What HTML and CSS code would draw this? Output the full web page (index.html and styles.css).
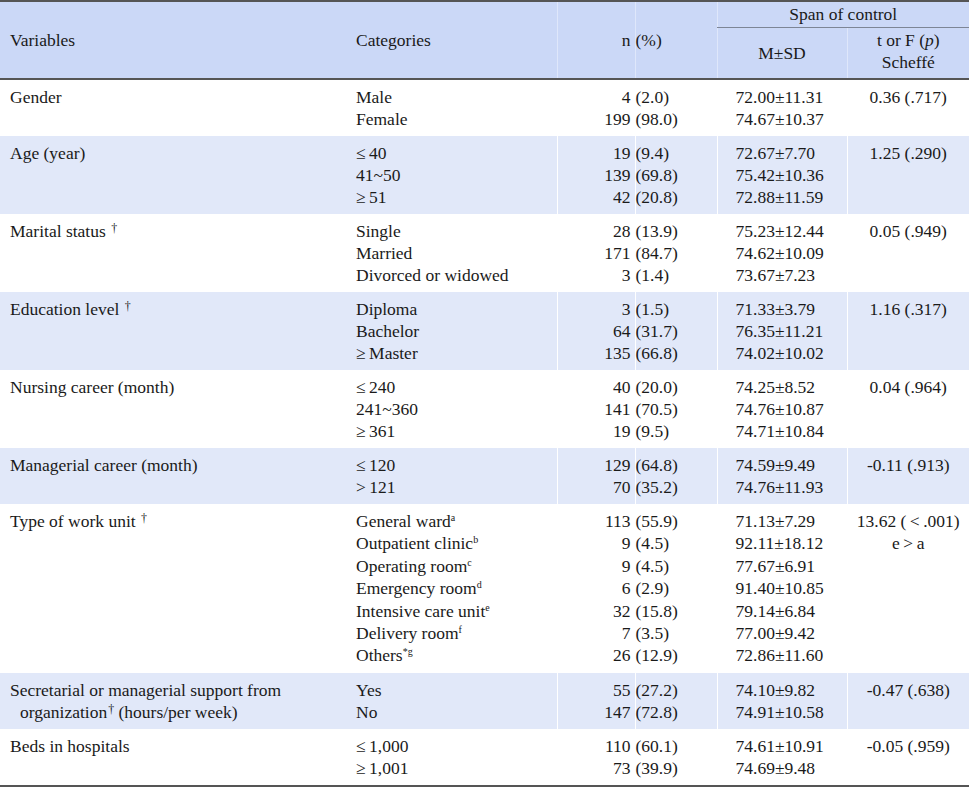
FILE: index.html
```html
<!DOCTYPE html>
<html>
<head>
<meta charset="utf-8">
<link rel="stylesheet" href="styles.css">
</head>
<body>
<table class="tbl">
  <colgroup>
    <col class="c-var"><col class="c-cat"><col class="c-n"><col class="c-pct"><col class="c-msd"><col class="c-t">
  </colgroup>
  <thead>
    <tr class="h1">
      <th rowspan="2" class="var">Variables</th>
      <th rowspan="2" class="cat">Categories</th>
      <th rowspan="2" class="n">n</th>
      <th rowspan="2" class="pct">(%)</th>
      <th colspan="2" class="span">Span of control</th>
    </tr>
    <tr class="h2">
      <th class="msd">M±SD</th>
      <th class="t">t or F (<i>p</i>)<br>Scheffé</th>
    </tr>
  </thead>
  <tbody>
    <tr>
      <td class="var">Gender</td>
      <td class="cat">Male<br>Female</td>
      <td class="n">4<br>199</td>
      <td class="pct">(2.0)<br>(98.0)</td>
      <td class="msd">72.00±11.31<br>74.67±10.37</td>
      <td class="t">0.36 (.717)</td>
    </tr>
    <tr class="alt">
      <td class="var">Age (year)</td>
      <td class="cat">≤&thinsp;40<br>41~50<br>≥&thinsp;51</td>
      <td class="n">19<br>139<br>42</td>
      <td class="pct">(9.4)<br>(69.8)<br>(20.8)</td>
      <td class="msd">72.67±7.70<br>75.42±10.36<br>72.88±11.59</td>
      <td class="t">1.25 (.290)</td>
    </tr>
    <tr>
      <td class="var">Marital status <sup class="dag">†</sup></td>
      <td class="cat">Single<br>Married<br>Divorced or widowed</td>
      <td class="n">28<br>171<br>3</td>
      <td class="pct">(13.9)<br>(84.7)<br>(1.4)</td>
      <td class="msd">75.23±12.44<br>74.62±10.09<br>73.67±7.23</td>
      <td class="t">0.05 (.949)</td>
    </tr>
    <tr class="alt">
      <td class="var">Education level <sup class="dag">†</sup></td>
      <td class="cat">Diploma<br>Bachelor<br>≥&thinsp;Master</td>
      <td class="n">3<br>64<br>135</td>
      <td class="pct">(1.5)<br>(31.7)<br>(66.8)</td>
      <td class="msd">71.33±3.79<br>76.35±11.21<br>74.02±10.02</td>
      <td class="t">1.16 (.317)</td>
    </tr>
    <tr>
      <td class="var">Nursing career (month)</td>
      <td class="cat">≤&thinsp;240<br>241~360<br>≥&thinsp;361</td>
      <td class="n">40<br>141<br>19</td>
      <td class="pct">(20.0)<br>(70.5)<br>(9.5)</td>
      <td class="msd">74.25±8.52<br>74.76±10.87<br>74.71±10.84</td>
      <td class="t">0.04 (.964)</td>
    </tr>
    <tr class="alt">
      <td class="var">Managerial career (month)</td>
      <td class="cat">≤&thinsp;120<br>&gt;&thinsp;121</td>
      <td class="n">129<br>70</td>
      <td class="pct">(64.8)<br>(35.2)</td>
      <td class="msd">74.59±9.49<br>74.76±11.93</td>
      <td class="t">-0.11 (.913)</td>
    </tr>
    <tr class="tall">
      <td class="var">Type of work unit <sup class="dag">†</sup></td>
      <td class="cat">General ward<sup>a</sup><br>Outpatient clinic<sup>b</sup><br>Operating room<sup>c</sup><br>Emergency room<sup>d</sup><br>Intensive care unit<sup>e</sup><br>Delivery room<sup>f</sup><br>Others<sup>*g</sup></td>
      <td class="n">113<br>9<br>9<br>6<br>32<br>7<br>26</td>
      <td class="pct">(55.9)<br>(4.5)<br>(4.5)<br>(2.9)<br>(15.8)<br>(3.5)<br>(12.9)</td>
      <td class="msd">71.13±7.29<br>92.11±18.12<br>77.67±6.91<br>91.40±10.85<br>79.14±6.84<br>77.00±9.42<br>72.86±11.60</td>
      <td class="t">13.62 (&thinsp;&lt;&thinsp;.001)<br>e&thinsp;&gt;&thinsp;a</td>
    </tr>
    <tr class="alt">
      <td class="var"><div class="hang">Secretarial or managerial support from<br>organization<sup class="dag">†</sup> (hours/per week)</div></td>
      <td class="cat">Yes<br>No</td>
      <td class="n">55<br>147</td>
      <td class="pct">(27.2)<br>(72.8)</td>
      <td class="msd">74.10±9.82<br>74.91±10.58</td>
      <td class="t">-0.47 (.638)</td>
    </tr>
    <tr>
      <td class="var">Beds in hospitals</td>
      <td class="cat">≤&thinsp;1,000<br>≥&thinsp;1,001</td>
      <td class="n">110<br>73</td>
      <td class="pct">(60.1)<br>(39.9)</td>
      <td class="msd">74.61±10.91<br>74.69±9.48</td>
      <td class="t">-0.05 (.959)</td>
    </tr>
  </tbody>
</table>
</body>
</html>
```

FILE: styles.css
```css
html, body {
  margin: 0;
  padding: 0;
  background: #ffffff;
}

.tbl {
  border-collapse: collapse;
  table-layout: fixed;
  width: 969px;
  font-family: "Liberation Serif", "Times New Roman", serif;
  font-size: 17.5px;
  line-height: 22px;
  color: #1a1a1a;
  border-top: 2px solid #555555;
  border-bottom: 2px solid #555555;
}

.c-var { width: 345px; }
.c-cat { width: 212px; }
.c-n { width: 78px; }
.c-pct { width: 82px; }
.c-msd { width: 130px; }
.c-t { width: 122px; }

.tbl th {
  font-weight: normal;
  background: #cbd8f7;
  vertical-align: middle;
  padding: 3px 0;
}

.tbl thead {
  border-bottom: 2px solid #555555;
}

.tbl th.var { text-align: left; padding-left: 10px; }
.tbl th.cat { text-align: left; padding-left: 11px; }
.tbl th.n { text-align: right; padding-right: 4px; border-left: 1px solid #dfe7fb; }
.tbl th.pct { text-align: left; padding-left: 0; border-left: 1px solid #dfe7fb; }
.tbl th.span {
  text-align: center;
  border-left: 1px solid #dfe7fb;
  border-bottom: 1px solid #7d8596;
  height: 22px;
  padding: 1px 0 2px;
}
.tbl th.msd { text-align: center; border-left: 1px solid #dfe7fb; }
.tbl th.t { text-align: center; border-left: 1px solid #dfe7fb; padding: 1px 0 5px; }

.tbl td {
  vertical-align: top;
  padding: 6px 0;
  white-space: nowrap;
}

.tbl tr.alt td { background: #e1e8f9; }
.tbl tr.tall td { line-height: 22.4px; }

.tbl td.var { padding-left: 10px; }
.tbl td.cat { padding-left: 11px; }
.tbl td.n { text-align: right; padding-right: 4px; border-left: 1px solid #ffffff; }
.tbl td.pct { text-align: left; padding-left: 0; border-left: 1px solid #ffffff; }
.tbl td.msd { text-align: left; padding-left: 18px; border-left: 1px solid #ffffff; }
.tbl td.t { text-align: center; border-left: 1px solid #ffffff; }

.hang {
  padding-left: 10px;
  text-indent: -10px;
}

.tbl sup {
  font-size: 10px;
  line-height: 0;
  vertical-align: 6px;
}

.tbl sup.dag {
  font-size: 12px;
  vertical-align: 5px;
  margin-left: 1px;
}
```
